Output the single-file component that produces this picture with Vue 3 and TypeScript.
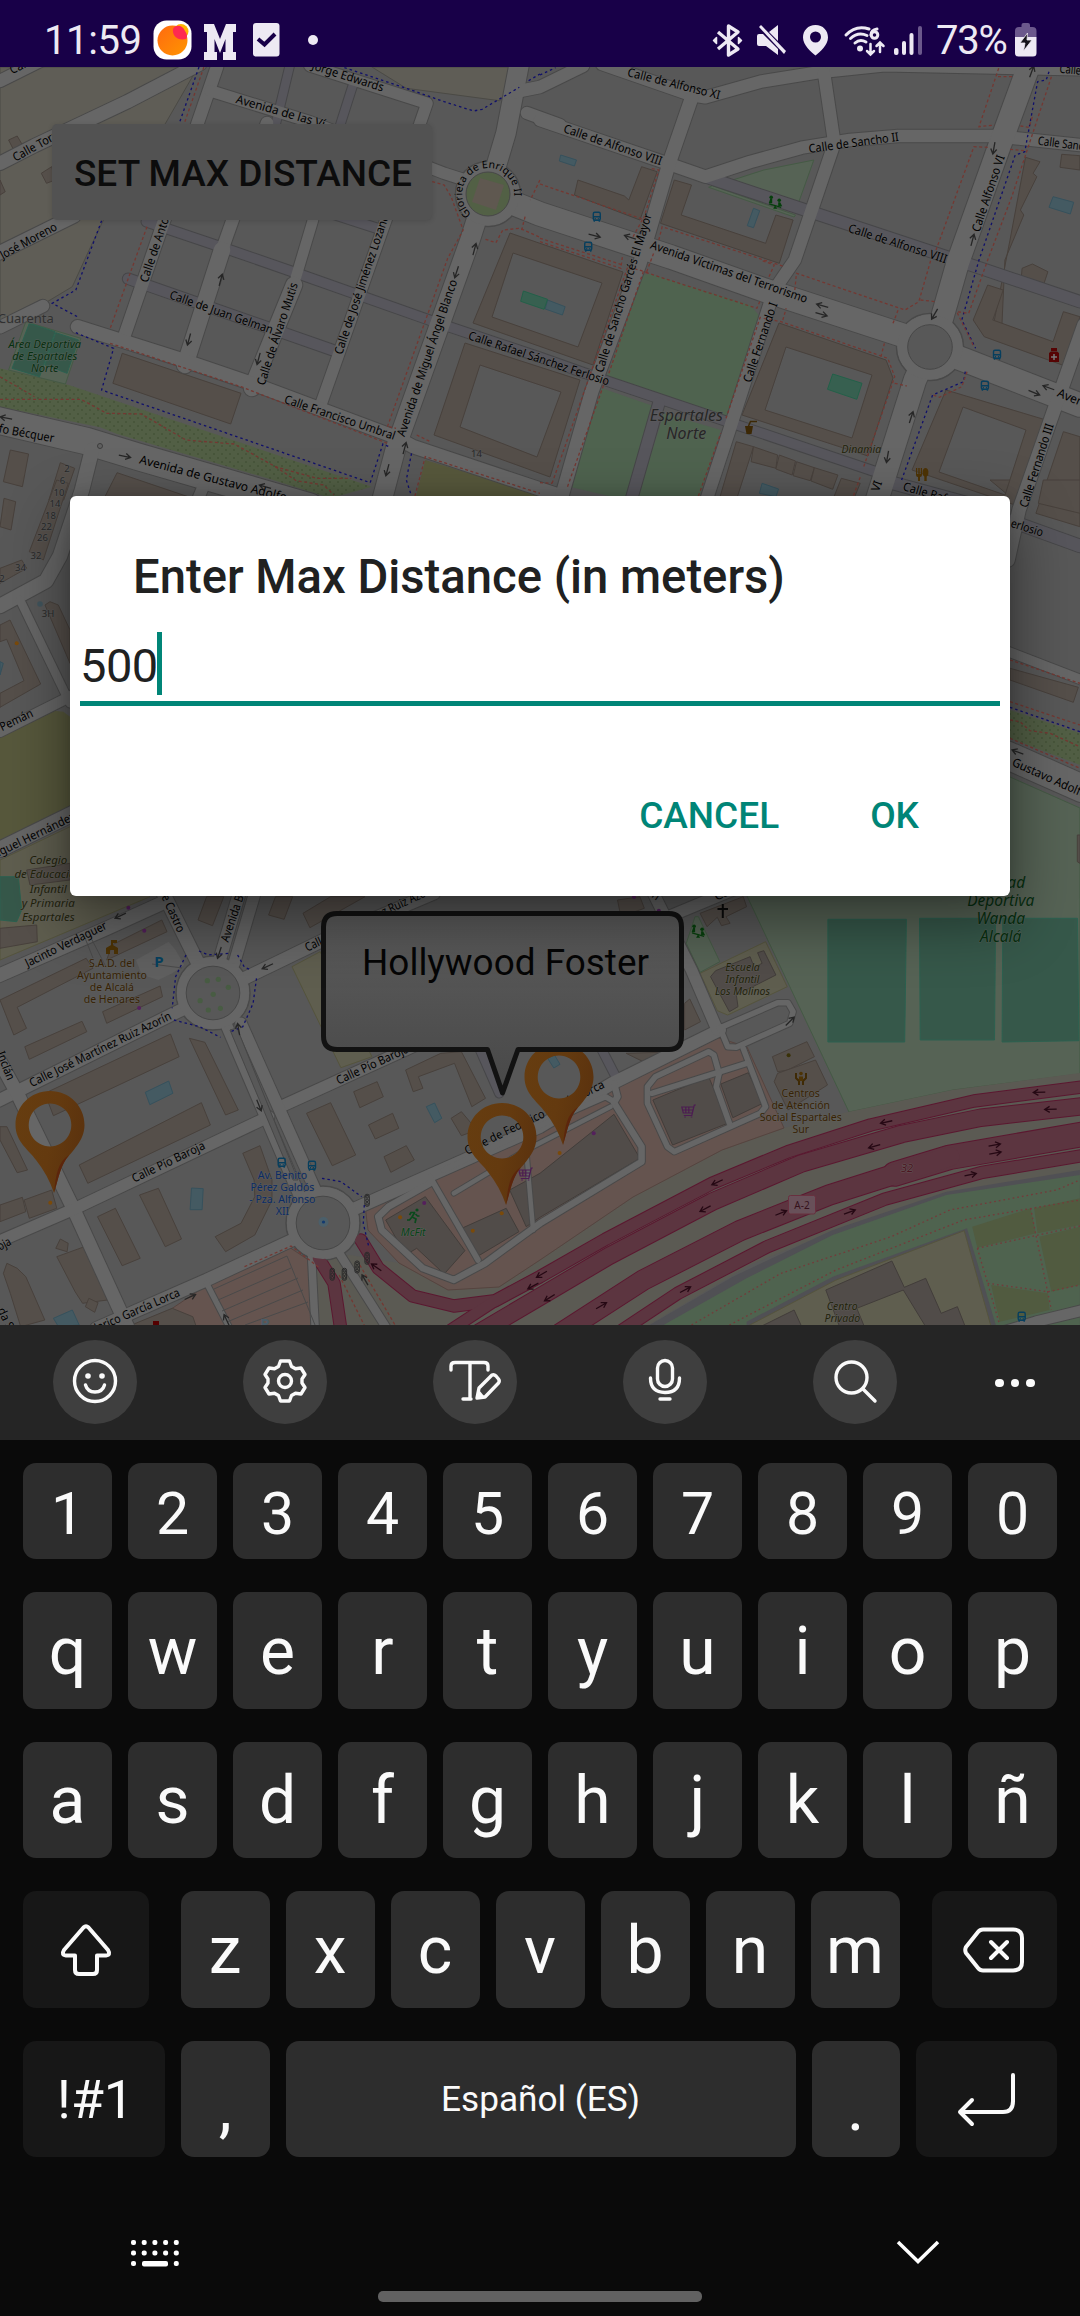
<script setup lang="ts">
type Pt = [number, number]
type Sheet = 'nw' | 'ne' | 'w' | 'e' | 'sw' | 'se' | 'fl' | 'fr' | 'pg'

// Every map sheet is digitised on its own grid: origin x, origin y, scale x, scale y.
const sheets: Record<Sheet, [number, number, number, number]> = {
  nw: [0, 0, 2.904, 3],
  ne: [540, 0, 2.904, 3],
  w: [0, 240, 2.904, 3],
  e: [540, 240, 2.904, 3],
  sw: [0, 880, 2.904, 3],
  se: [540, 880, 2.904, 3],
  fl: [0, 480, 3, 3],
  fr: [990, 480, 3, 3],
  pg: [0, 0, 1, 1],
}

function pt(s: Sheet, x: number, y: number): Pt {
  const [ox, oy, sx, sy] = sheets[s]
  return [Math.round((ox + x / sx) * 10) / 10, Math.round((oy + y / sy) * 10) / 10]
}
function conv(s: Sheet, list: string): string {
  return list
    .split(' ')
    .map((p) => {
      const [x, y] = p.split(',').map(Number)
      return pt(s, x, y).join(',')
    })
    .join(' ')
}

type Area = [Sheet, string, string]
const areaData: Area[] = [
  ['nw', 'sand', '0,201 575,201 480,371 310,640 270,725 210,860 0,990'],
  ['nw', 'sand', '1080,201 1180,265 1450,302 1510,262 1500,201'],
  ['w', 'meadow', '0,385 200,435 1080,740 960,775 800,722 340,582 290,562 0,500'],
  ['w', 'park', '75,245 235,295 190,432 25,390'],
  ['w', 'pitch', '85,250 160,275 115,410 35,385'],
  ['w', 'pitch', '162,278 228,300 195,400 130,375'],
  ['w', 'olive', '1235,660 1568,765 1568,800 1200,800'],
  ['e', 'grass', '300,104 320,102 610,195 635,225 540,540 195,408'],
  ['e', 'grass', '180,445 335,500 250,780 85,740'],
  ['e', 'grass', '360,520 525,570 460,780 280,780'],
  ['ne', 'park', '560,540 650,510 795,480 750,610'],
  ['ne', 'park', '490,562 500,557 742,645 738,651'],
  ['fl', 'olive', '0,770 160,692 190,695 210,710 210,990 0,1080'],
  ['fl', 'school', '0,1140 210,1040 450,1250 0,1440'],
  ['fl', 'pitch', '0,1190 55,1190 65,1290 50,1325 0,1320'],
  ['fr', 'meadow', '60,690 270,760 270,855 60,775'],
  ['pg', 'park', '1010,777 1080,808 1080,1074 953,1090 849,1112 747,896 747,860'],
  ['se', 'pitch', '836,118 1064,118 1059,486 836,486'],
  ['se', 'pitch', '1102,115 1323,115 1320,480 1104,480'],
  ['se', 'pitch', '1344,115 1561,115 1565,482 1342,486'],
  ['sw', 'school', '848,260 930,215 1080,530 990,563'],
  ['sw', 'yard', '395,240 490,185 510,210 535,255 500,280 460,300 430,290 410,280'],
  ['se', 'school', '465,280 655,185 718,320 545,405 515,392'],
  ['se', 'park', '450,110 460,110 522,245 465,277 425,190'],
  ['pg', 'verge', '540,1260 633,1197 722,1150 784,1128 848,1112 952,1090 1080,1073 1080,1172 950,1192 848,1225 750,1265 640,1330 300,1330 313,1260 350,1255 399,1263 448,1290 499,1287'],
  ['pg', 'retail', '716,1037 747,1047 784,1128 722,1150 633,1197 540,1260 499,1287 448,1290 399,1263 368,1230 365,1205 427,1177 540,1127'],
  ['pg', 'retail', '289,1247 313,1263 317,1330 140,1330 210,1283'],
  ['se', 'shoulder', '310,1340 560,1190 850,1050 1180,935 1568,870 1568,1340'],
  ['se', 'grass', '350,1340 600,1195 850,1065 1180,945 1568,885 1568,1340'],
  ['se', 'shoulder', '600,1325 850,1190 1240,1045 1325,1340 600,1340'],
  ['se', 'school', '600,1340 860,1200 1232,1052 1310,1340'],
  ['se', 'meadow2', '1255,1040 1425,985 1440,1060 1270,1103'],
  ['se', 'meadow2', '1435,985 1568,955 1568,1035 1445,1060'],
  ['se', 'meadow2', '1450,1070 1568,1040 1568,1215 1485,1235'],
  ['se', 'meadow2', '1310,1215 1475,1240 1480,1290 1335,1325'],
]

const buildingData: [Sheet, string[]][] = [
  ['nw', ['25,420 50,408 68,440 42,455', '120,520 150,500 160,540 135,550', '0,540 15,575 0,585']],
  ['ne', [
    '110,540 245,588 258,600 295,500 340,515 290,660 100,585',
    '390,540 440,555 410,645 655,730 685,645 735,660 695,790 350,670',
    '1410,472 1452,485 1432,520 1443,530 1395,630 1405,645 1350,780 1340,1010 1312,1000 1365,720',
    '1515,463 1568,467 1568,510 1510,502',
  ]],
  ['w', [
    '355,340 700,460 670,552 328,430',
    '30,630 83,642 65,740 10,725',
    '175,668 217,685 185,780 142,780',
    '340,698 560,775 300,780',
  ]],
  ['e', [
    '1300,135 1345,150 1315,240 1490,305 1520,215 1568,230 1530,380 1290,290 1258,240',
    '1400,85 1430,72 1475,95 1463,132 1398,110',
    '1520,575 1568,590 1568,860 1440,820',
    '570,605 620,620 570,780 520,780',
    '620,620 690,645 685,685 613,665', '695,645 742,663 732,705 685,687',
    '745,665 797,683 785,722 735,707', '797,683 865,705 850,748 787,723',
    '875,715 930,730 910,780 850,780',
  ]],
  ['fl', [
    '12,55 47,65 33,150 0,140', '170,0 205,10 130,240 88,215', '0,265 65,240 80,265 0,310',
    '30,420 122,612 0,682 0,640 72,602 20,478 0,485 0,435', '135,375 150,365 175,375 210,450 210,550',
    '80,1170 210,1150 210,1200 90,1215', '0,1345 110,1335 112,1385 0,1405',
  ]],
  ['fr', ['60,565 265,622 250,667 60,600', '60,0 0,0 60,50', '160,0 270,0 270,100 145,70', '262,1065 270,1065 270,1150 262,1145']],
  ['sw', [
    '0,360 250,235 270,265 50,382 77,445 40,465', '325,195 470,120 485,155 310,240',
    '298,395 465,318 472,350 310,430', '72,500 238,424 252,455 85,538',
    '130,640 495,462 520,530 155,707', '230,855 585,668 611,735 255,910',
    '550,475 595,487 692,690 655,705', '405,945 460,925 527,1077 480,1100',
    '283,1010 335,985 407,1135 355,1157',
    '705,820 755,797 790,900 790,960 740,1065 655,1115 625,1070 700,1030 740,950 738,900',
    '890,700 960,668 1033,825 965,857', '1027,635 1095,605 1113,650 1045,683',
    '1070,735 1140,700 1158,745 1090,777', '1115,830 1180,797 1203,840 1135,877',
    '1178,570 1280,520 1340,515 1410,655 1370,680 1320,550 1215,590 1228,625 1200,635',
    '1310,715 1340,695 1385,750 1340,767', '575,120 600,50 650,50 617,137', '780,105 800,50 850,50 825,118',
    '880,100 960,50 1060,50 900,143', '70,960 150,930 165,985 85,1015', '0,740 20,740 80,870 50,878 0,780',
    '0,975 65,952 75,995 0,1025',
    '165,1130 245,1100 312,1260 240,1270 218,1235', '162,1105 175,1077 198,1090 195,1115',
    '248,1280 258,1255 285,1268 275,1297', '10,1180 20,1150 50,1165 75,1190 130,1320 60,1340 30,1240',
    '370,1340 500,1285 560,1310 570,1340',
  ]],
  ['se', [
    '225,60 290,50 303,85 235,110', '420,370 435,357 466,425 420,450', '250,520 410,515 300,545',
    '465,100 590,50 600,80 540,110 552,130 527,137 515,112 485,140',
    '675,530 775,485 797,530 720,570 690,575', '690,580 800,540 835,615 720,690 680,605',
  ]],
]
const darkBuildingData: [Sheet, string[]][] = [
  ['sw', ['1120,1020 1235,950 1350,1112 1290,1182 1210,1105 1178,1125', '1330,1050 1470,985 1507,1055 1390,1127']],
  ['se', [
    '-88,930 0,880 215,703 290,835 0,1012 -40,1040', '328,660 490,590 545,730 385,795', '525,612 605,578 647,670 560,713',
    '495,290 510,272 610,230 622,262 645,250 632,218 650,212 685,285 570,345 575,380 550,395',
    '830,1230 1022,1143 1058,1222 1120,1195 1165,1300 1212,1280 1235,1340 1120,1340 1055,1230 920,1285 942,1340 870,1340',
    '640,1340 738,1290 760,1340',
  ]],
]
// Blocks built around an inner court: outer outline and court outline.
const courtBlocks: [string, string][] = [
  ['510,233 623,272 593,365 473,323', '513,253 602,283 578,347 492,317'],
  ['465,343 580,380 550,477 434,435', '480,365 561,392 537,457 460,427'],
  ['779,323 886,360 893,378 868,456 742,415', '786,347 872,375 852,438 765,410'],
  ['946,390 1046,420 1018,506 912,470', '963,407 1026,430 1005,495 939,472'],
]

const poolData: Area[] = [
  ['ne', 'pool', '60,465 106,480 100,498 56,483'], ['ne', 'pool', '620,625 638,632 620,683 602,677'],
  ['ne', 'pool', '1490,590 1550,607 1540,642 1478,622'], ['e', 'pool', '22,180 73,200 65,225 15,207'],
  ['e', 'pool', '645,730 693,747 685,770 637,760'], ['e', 'mint', '850,402 935,430 920,478 835,448'],
  ['w', 'mint', '1520,153 1590,178 1580,208 1512,184'], ['sw', 'pool', '422,637 490,603 502,640 435,674'],
  ['sw', 'pool', '556,924 590,926 587,989 552,989'], ['sw', 'pool', '1238,680 1262,669 1283,715 1262,728'],
  ['sw', 'pool', '155,1315 210,1290 230,1335 170,1340'], ['se', 'pool', '22,535 42,525 58,553 40,564'],
  ['fl', 'pool', '0,545 10,550 0,585'],
]

// sheet, kind, width, points
type Road = [Sheet, string, number, string]
const roadData: Road[] = [
  ['nw', 'ped', 9, '842,195 800,375'], ['nw', 'ped', 9, '1028,245 988,375'],
  ['nw', 'ped', 10, '425,665 640,740 850,815 1260,965 1568,1072 1768,1145 2543,1415'],
  ['nw', 'ped', 10, '960,640 1110,690'],
  ['w', 'ped', 11, '372,116 965,330'],
  ['ne', 'ped', 12, '480,530 770,630 1180,770 1568,905'],
  ['e', 'ped', 12, '345,490 262,790'], ['e', 'ped', 13, '1000,722 1240,790'],
  ['fr', 'ped', 13, '60,122 270,198'], ['sw', 'ped', 9, '1390,500 1450,640'],
  ['se', 'ped', 9, '175,500 225,600'],
  ['pg', 'road', 13, '0,81 58,52'], ['nw', 'road', 14, '0,490 100,437 370,305 580,192'],
  ['nw', 'road', 14, '-5,760 215,648'], ['w', 'road', 13, '0,262 125,198'],
  ['pg', 'road', 13, '217,67 124,337'], ['nw', 'road', 12, '610,272 900,365 1290,520 1380,550'],
  ['nw', 'road', 12, '900,197 1240,310 1200,430'], ['pg', 'road', 12, '413,143 320,407'],
  ['pg', 'road', 13, '267,123 222,250'], ['pg', 'road', 17, '222,250 185,365'],
  ['pg', 'road', 11, '313,220 296,277'], ['pg', 'road', 17, '294,285 252,388'],
  ['w', 'road', 14, '225,260 530,360 730,430 1150,592 1200,620 1620,765'],
  ['pg', 'road', 20, '520,60 506,133 492,180'], ['pg', 'road', 20, '478,215 470,240 396,447 382,500'],
  ['pg', 'road', 13, '515,92 540,87 583,66'], ['pg', 'road', 13, '527,113 560,125'],
  ['ne', 'road', 13, '0,360 370,490 480,530 610,486 760,443 900,420 1040,408 1320,408 1568,435'],
  ['ne', 'road', 13, '180,192 440,285 480,292 640,245 820,215 1000,196 1568,208'],
  ['ne', 'road', 14, '440,295 375,490 290,790 150,1175 60,1500'],
  ['ne', 'road', 13, '825,220 855,430 740,780 680,870 550,1290 480,1510'],
  ['pg', 'road', 24, '505,200 540,214 671,257 764,290 902,335 930,347 967,361 1080,405'],
  ['pg', 'road', 23, '1031,60 998,150 958,262 940,325 915,380 877,500'],
  ['pg', 'road', 14, '1084,325 1053,413 1019,510 1008,560'],
  ['w', 'road', 27, '-10,540 250,603 400,650 900,800'], ['w', 'road', 12, '590,740 570,790'],
  ['pg', 'road', 15, '92,450 82,490 60,556 46,581 0,606'],
  ['fl', 'road', 9, '60,360 210,670'], ['fl', 'road', 11, '0,755 230,640'], ['fl', 'road', 16, '0,1108 230,995'],
  ['fr', 'road', 10, '55,515 275,600'], ['fr', 'road', 28, '50,825 275,925'],
  ['sw', 'road', 14, '-5,287 310,145 480,65'], ['sw', 'road', 14, '465,20 585,270'],
  ['sw', 'road', 13, '695,40 635,250'], ['sw', 'road', 12, '740,40 680,250'],
  ['sw', 'road', 13, '700,300 940,180 1260,40'], ['sw', 'road', 13, '-5,662 530,388'],
  ['sw', 'road', 14, '0,545 50,640 215,990 370,1340'], ['sw', 'road', 12, '-5,1085 215,987 780,710'],
  ['sw', 'road', 12, '815,680 1400,405'], ['sw', 'road', 12, '655,430 875,960'], ['sw', 'road', 12, '700,430 920,940'],
  ['sw', 'road', 13, '280,1345 600,1200 860,1075'], ['sw', 'road', 13, '1000,1000 1568,740 1778,610 2090,450'],
  ['sw', 'road', 8, '905,1130 915,1340'], ['sw', 'road', 9, '985,1120 1120,1340'], ['sw', 'road', 6, '600,1210 670,1350'],
  ['se', 'road', 12, '320,20 440,270 515,450'], ['se', 'road', 12, '350,120 560,30'],
  ['se', 'lane', 6, '520,445 690,368 720,368 735,395 725,430 570,502 545,500 525,450'],
  ['se', 'lane', 6, '590,505 655,680 640,700 390,815 370,800 312,670 312,620 335,590 490,515 505,525 520,580'],
  ['se', 'lane', 6, '325,640 600,550'], ['se', 'lane', 6, '520,580 512,620 550,730'],
  ['se', 'lane', 7, '215,610 225,650 215,668 295,800 295,845 0,1030 -160,1150 -250,1200 -340,1165 -460,1050 -470,1010 -440,980 -320,910'],
  ['se', 'lane', 6, '215,665 190,650 -30,750 -280,870'], ['se', 'lane', 6, '-320,890 -180,1140'],
  ['se', 'lane', 5, '205,680 -40,810 -250,940'], ['se', 'lane', 5, '-40,810 -20,1050'],
  ['se', 'motor', 12, '1580,620 1260,663 960,735 720,815 500,910 190,1078 0,1190 -130,1262 -250,1278 -370,1248 -470,1165 -520,1080'],
  ['se', 'motor', 17, '1580,678 1280,713 1050,762 760,850 500,965 200,1128 0,1250 -180,1360'],
  ['se', 'motor', 11, '0,1190 -130,1262 -260,1350'],
  ['se', 'motor', 24, '1580,762 1190,832 1030,882'], ['se', 'motor', 20, '1190,830 840,945 580,1052 300,1200 60,1360'],
  ['se', 'motor', 12, '1580,826 1280,878 1000,958 660,1100 400,1240 225,1360'],
  ['sw', 'motor', 12, '925,1135 970,1210 990,1350'],
  ['se', 'road', 11, '1330,1360 1440,1325 1580,1290'],
]
const roads = roadData.map(([s, k, w, p]) => ({ kind: k, w, d: conv(s, p) }))

const dashData: Area[] = [
  ['nw', 'blue', '578,201 520,371'], ['nw', 'red', '592,201 535,371'],
  ['nw', 'blue', '1000,203 1180,265 1290,305 1375,333 1400,328 1508,262'], ['nw', 'blue', '1535,242 1568,222'],
  ['nw', 'blue', '295,662 220,870 152,910 228,952'], ['nw', 'red', '427,680 320,985'],
  ['nw', 'red', '1255,545 1290,555 1310,590 1345,690 1300,775 1125,1280'],
  ['nw', 'red', '1568,540 1540,600'], ['nw', 'red', '1410,718 1440,728 1460,690 1510,685 1568,712'],
  ['nw', 'red', '1525,650 1515,690'], ['w', 'blue', '220,278 330,325 295,450 1075,728 1112,612 1130,620'],
  ['w', 'red', '320,310 700,440 1130,612'], ['w', 'red', '1130,560 1150,565'], ['w', 'red', '0,410 100,470'],
  ['w', 'red', '0,478 235,478 310,520 410,522 540,600 680,612 800,680 920,715 1020,715'],
  ['w', 'red', '800,680 860,722 940,735 970,765'], ['w', 'blue', '1195,640 1180,720 1195,768'],
  ['w', 'red', '1205,768 1235,650 1568,760'], ['w', 'red', '1210,585 1250,605'],
  ['ne', 'red', '0,552 300,658 345,510 320,505'], ['ne', 'red', '270,710 300,655'], ['ne', 'red', '345,720 355,680 710,800'],
  ['ne', 'red', '0,715 240,795'], ['ne', 'red', '1332,205 1275,380 1320,375'], ['ne', 'red', '1330,230 1375,230'],
  ['ne', 'red', '1300,442 1260,440 1150,750'], ['ne', 'blue', '1478,215 1470,240 1445,245 1408,455 1380,465 1275,780 1225,960 1265,1045'],
  ['ne', 'red', '1485,230 1370,590 1300,780 1245,940 1210,935 1260,1040'], ['ne', 'red', '1395,378 1420,382 1430,350'], ['ne', 'red', '1365,448 1410,452'],
  ['ne', 'blue', '0,225 45,203'],
  ['e', 'red', '0,5 235,85 240,45'], ['e', 'red', '310,95 330,40'], ['e', 'red', '665,110 680,75 640,60'],
  ['e', 'red', '200,400 300,95 630,205 640,180'], ['e', 'red', '640,230 540,535'],
  ['e', 'red', '35,730 255,80 320,100'], ['e', 'red', '0,728 35,730'], ['e', 'red', '80,740 190,420'],
  ['e', 'red', '460,768 525,580'], ['e', 'red', '740,150 745,100 1060,210 1100,185 1135,60'],
  ['e', 'red', '1025,250 1040,210'], ['e', 'red', '1105,180 1150,185'], ['e', 'red', '650,235 700,245 1010,355 1030,410 940,680'],
  ['e', 'red', '705,240 715,205'], ['e', 'red', '990,350 1000,310'], ['e', 'red', '1030,430 1065,438'],
  ['e', 'blue', '1235,395 1230,425 1140,465 1050,720'], ['e', 'red', '1240,395 1225,440 1160,472 1135,462'],
  ['e', 'red', '930,712 910,768'], ['fr', 'red', '60,540 270,610'], ['fr', 'red', '60,665 270,735'],
  ['fr', 'blue', '60,682 270,755'], ['fr', 'red', '60,720 90,725 120,752 180,760 270,800'], ['fr', 'red', '60,775 270,865'],
  ['sw', 'blue', '540,225 510,290 500,385'], ['sw', 'blue', '578,213 605,225 665,220'], ['sw', 'blue', '690,225 710,262 730,270'],
  ['sw', 'blue', '745,295 735,370 705,440 670,455'], ['sw', 'blue', '505,420 580,440 640,472'],
  ['sw', 'blue', '935,895 990,905 1050,950'], ['sw', 'blue', '1058,975 1055,1030 1072,1105'],
  ['sw', 'red', '710,1160 845,1098 930,1165'], ['sw', 'red', '985,1185 1060,1340'], ['sw', 'red', '1045,1155 1150,1340'],
  ['se', 'pink', '440,1335 700,1180 1020,1070 1190,990 1500,930 1568,900'], ['se', 'pink', '550,1335 860,1170 1230,1020 1568,960'],
  ['se', 'pink', '1425,985 1440,1065 1485,1290'], ['se', 'pink', '1270,1105 1568,1038'],
  ['se', 'pink', '1270,1105 1300,1210 1335,1335'], ['se', 'pink', '1300,1210 1475,1235 1568,1215'],
]

// Street names run along a baseline given by its first and last point.
type Label = [Sheet, string, number, number, number, number]
const labelData: Label[] = [
  ['nw', 'Call', 35, 223, 85, 198], ['nw', 'Calle Torr', 45, 485, 168, 415], ['nw', 'José Moreno', 8, 778, 168, 688],
  ['nw', 'Jorge Edwards', 903, 207, 1110, 275], ['nw', 'Avenida de las Ví', 683, 308, 940, 385],
  ['w', 'Calle de Antoni', 428, 130, 500, -90], ['w', 'Calle de Juan Gelman', 490, 175, 788, 282],
  ['w', 'Calle de Álvaro Mutis', 768, 438, 865, 133], ['w', 'Calle de José Jiménez Lozano', 993, 346, 1130, -72],
  ['w', 'Avenida de Miguel Ángel Blanco', 1175, 592, 1328, 124], ['w', 'Calle Francisco Umbral', 823, 488, 1143, 600],
  ['w', 'Calle Rafael Sánchez Ferlosio', 1358, 297, 1765, 437], ['w', 'fo Bécquer', -5, 577, 155, 607],
  ['w', 'Avenida de Gustavo Adolfo', 403, 670, 830, 785],
  ['ne', 'Calle de Alfonso XI', 252, 228, 520, 298], ['ne', 'Calle de Alfonso VIII', 66, 396, 350, 496],
  ['ne', 'Calle de Sancho II', 782, 459, 1043, 422], ['ne', 'Calle de Alfonso VIII', 893, 695, 1178, 790],
  ['ne', 'Calle Alfonso VI', 1276, 698, 1350, 470], ['ne', 'Calle Sancho', 1445, 434, 1610, 455], ['ne', 'Calle', 1508, 218, 1570, 224],
  ['e', 'Calle de Sancho Garcés El Mayor', 182, 400, 325, -75], ['e', 'Avenida Víctimas del Terrorismo', 318, 25, 772, 189],
  ['e', 'Calle Fernando I', 612, 430, 690, 192], ['e', 'Avenida', 1500, 468, 1620, 520],
  ['e', 'Calle Fernando III', 1415, 805, 1492, 555], ['e', 'VI', 984, 757, 994, 727], ['e', 'Calle Rafael', 1052, 750, 1220, 800],
  ['fl', 'Pemán', 6, 754, 102, 708], ['fl', 'Miguel Hernández', -30, 1143, 228, 1018],
  ['fr', 'erlosio', 60, 140, 155, 170], ['fr', 'Gustavo Adolfo', 64, 856, 285, 955],
  ['sw', 'Jacinto Verdaguer', 80, 262, 313, 145], ['sw', 'e Castro', 468, 50, 517, 160], ['sw', 'Avenida B', 663, 188, 708, 50],
  ['sw', 'Calle José Martínez Ruiz Azorín', 92, 622, 500, 416], ['sw', 'Calle José Martínez Ruiz Azor', 892, 215, 1250, 43],
  ['sw', 'Calle Pío Baroja', 390, 908, 598, 805], ['sw', 'Calle Pío Baroja', 983, 614, 1190, 515],
  ['sw', 'oja', 0, 1112, 35, 1093], ['sw', 'Inclán', -10, 520, 22, 603], ['sw', 'Federico García Lorca', 240, 1375, 525, 1247],
  ['sw', 'Calle de Federico García Lorca', 1356, 825, 1758, 622], ['sw', 'da S', -8, 1290, 20, 1350],
  ['se', 'Calle', 512, 62, 590, 28], ['se', 'n', 322, 50, 338, 62],
]
const labels = labelData.map(([s, text, x1, y1, x2, y2]) => {
  const a = pt(s, x1, y1)
  const b = pt(s, x2, y2)
  const len = Math.hypot(b[0] - a[0], b[1] - a[1])
  const angle = (Math.atan2(b[1] - a[1], b[0] - a[0]) * 180) / Math.PI
  return { text, len, t: `translate(${a[0]} ${a[1]}) rotate(${angle.toFixed(2)})` }
})

// Places: sheet, class, centre x, first baseline, size, leading, lines
type Place = [Sheet, string, number, number, number, number, string[]]
const placeData: Place[] = [
  ['w', 'quarter up', 75, 248, 13, 14, ['Cuarenta']],
  ['w', 'sport', 130, 325, 11, 12, ['Área Deportiva', 'de Espartales', 'Norte']],
  ['e', 'quarter', 425, 542, 16, 18, ['Espartales', 'Norte']],
  ['e', 'leisure', 933, 640, 10.5, 12, ['Dinamia']],
  ['fl', 'edu', 145, 1152, 11.5, 14.3, ['Colegio', 'de Educación', 'Infantil', 'y Primaria', 'Espartales']],
  ['sw', 'office', 325, 260, 10.5, 12, ['S.A.D. del', 'Ayuntamiento', 'de Alcalá', 'de Henares']],
  ['sw', 'transit', 820, 896, 10.5, 12, ['Av. Benito', 'Pérez Galdós', '- Pza. Alfonso', 'XII']],
  ['sw', 'gym', 1200, 1068, 10.5, 12, ['McFit']],
  ['se', 'edu', 588, 272, 10.5, 12, ['Escuela', 'Infantil', 'Los Molinos']],
  ['se', 'office', 757, 650, 10.5, 12, ['Centros', 'de Atención', 'Social Espartales', 'Sur']],
  ['se', 'sport', 1338, 25, 15.5, 17.8, ['Ciudad', 'Deportiva', 'Wanda', 'Alcalá']],
  ['se', 'edu', 878, 1289, 10.5, 12, ['Centro', 'Privado']],
  ['se', 'exit', 1066, 875, 11, 12, ['32']],
]
const places = placeData.flatMap(([s, cls, cx, y, size, lead, lines]) => {
  const p = pt(s, cx, y)
  return lines.map((text, i) => ({ text, cls, size, x: p[0], y: p[1] + i * lead }))
})
const numbers: [string, number, number][] = [
  ['14', 476.5, 457], ['2', 67, 472], ['6', 62.5, 484], ['10', 59, 495.5], ['14', 55, 507], ['18', 50.5, 519],
  ['22', 46.5, 530], ['26', 42.5, 541], ['32', 36, 559], ['34', 20.5, 571], ['2', 2, 582], ['3H', 48, 617],
]
const arrows = ([
  ['nw', 1378, 748, -75], ['w', 1326, 96, 108], ['w', 641, 120, -75],
  ['w', 549, 298, 105], ['w', 751, 356, 105], ['w', 1175, 625, -75], ['w', 1125, 690, 105], ['w', 18, 534, 190],
  ['w', 362, 649, 12], ['w', 770, 740, 195], ['ne', 158, 707, 15], ['ne', 262, 712, 198], ['ne', 1428, 215, -70],
  ['ne', 1318, 444, 100], ['ne', 1256, 720, -75], ['e', 820, 197, 195], ['e', 817, 223, 15], ['e', 1146, 222, 120],
  ['e', 1078, 532, -72], ['e', 1009, 650, 100], ['e', 1477, 443, 200], ['e', 1435, 458, 22], ['fr', 83, 816, 200],
  ['sw', 350, 107, 155], ['sw', 637, 218, 108], ['sw', 777, 259, 155], ['sw', 693, 448, -100], ['sw', 752, 676, 68],
  ['sw', 552, 1251, -25], ['sw', 1060, 1200, -120], ['sw', 658, 1320, -115], ['se', 726, 424, -45],
] as [Sheet, number, number, number][]).map(([s, x, y, r]) => ({ p: pt(s, x, y), r }))
const motorArrows = ([
  [1450, 637, 178], [1483, 688, 178], [1006, 726, 168], [971, 799, 165], [515, 907, 155], [480, 986, 152], [28, 1253, 148],
  [1320, 795, -10], [1322, 819, -10], [1250, 884, -12], [700, 999, -22], [899, 996, -20], [422, 1229, -28], [178, 1277, -30],
  [5, 1183, 150], [-20, 1218, 152], [-475, 1162, 215],
] as [number, number, number][]).map(([x, y, r]) => ({ p: pt('se', x, y), r }))
const buses = ([['ne', 165, 650], ['e', 140, 20], ['e', 1327, 344], ['e', 1292, 437], ['sw', 818, 848], ['sw', 906, 857], ['se', 1399, 1310]] as [Sheet, number, number][]).map(([s, x, y]) => pt(s, x, y))
const lights = ([[1066, 961], [1066, 1135], [1037, 1161], [1000, 1183], [965, 1183]] as Pt[]).map(([x, y]) => pt('sw', x, y))
const dots = ([
  ['sw', 373, 83, '#54205c'], ['sw', 419, 152, '#54205c'], ['sw', 404, 384, '#54205c'], ['sw', 1232, 969, '#54205c'],
  ['se', 273, 51, '#54205c'], ['se', 345, 92, '#54205c'], ['se', 156, 760, '#54205c'], ['sw', 146, 968, '#7a4a0a'],
  ['sw', 1162, 1012, '#7a4a0a'], ['sw', 1373, 1052, '#7a4a0a'], ['sw', 1457, 1000, '#7a4a0a'], ['se', 57, 819, '#7a4a0a'],
  ['fl', 50, 490, '#7a4a0a'], ['se', 722, 526, '#3a3208'],
] as [Sheet, number, number, string][]).map(([s, x, y, c]) => ({ p: pt(s, x, y), c }))
const trees = ([[602, 302], [634, 298], [663, 322], [619, 343], [581, 362], [605, 390], [640, 385]] as Pt[]).map(([x, y]) => pt('sw', x, y))
const carts = [pt('se', 432, 693), pt('sw', 1527, 882)]
const playgrounds = [pt('ne', 683, 607), pt('se', 459, 154)]
const pins: Pt[] = [[50, 1125], [559, 1077], [502, 1137]]

const areas = areaData.map(([s, c, p]) => ({ c, d: conv(s, p) }))
const pools = poolData.map(([s, c, p]) => ({ c, d: conv(s, p) }))
const dashes = dashData.map(([s, c, p]) => ({ c, d: conv(s, p) }))
const buildings = buildingData.flatMap(([s, l]) => l.map((p) => conv(s, p)))
const darkBuildings = darkBuildingData.flatMap(([s, l]) => l.map((p) => conv(s, p)))

const digitKeys = '1234567890'.split('')
const topKeys = 'qwertyuiop'.split('')
const homeKeys = 'asdfghjklñ'.split('')
const lowKeys = 'zxcvbnm'.split('')
</script>

<template>
  <div class="screen">
    <header class="status">
      <span class="clock">11:59</span>
      <svg class="app" width="40" height="40" viewBox="0 0 40 40">
        <defs>
          <linearGradient id="orb" x1="0" y1="0" x2="1" y2="1"><stop offset="0" stop-color="#ff6a10" /><stop offset="1" stop-color="#ff9500" /></linearGradient>
        </defs>
        <rect x="0.5" y="0.5" width="38" height="39" rx="13" fill="#fff" />
        <circle cx="28" cy="11.5" r="7.5" fill="#ffb300" />
        <circle cx="19.5" cy="20.5" r="15" fill="url(#orb)" />
        <path d="M20 9 C22 5 29 4 32 11 C35 15 34 18 33 19 C25 21 19 16 20 9Z" fill="#ff2a50" />
      </svg>
      <svg class="mlogo" width="32" height="36" viewBox="0 0 32 36"><path d="M0 0H10L16 15L22 0H32V8H29V28H32V36H19V28H21.500V15L16 29L10.500 15V28H13V36H0V28H3V8H0Z" fill="#ede9f3" /></svg>
      <svg class="check" width="27" height="34" viewBox="0 0 27 34"><rect width="26.500" height="33.500" rx="3" fill="#ede9f3" /><path d="M5 16L11.500 21.500L22 11" fill="none" stroke="#180048" stroke-width="4" /></svg>
      <i class="more-dot"></i>
      <svg class="indicators" width="216" height="40" viewBox="710 20 216 40" fill="none" stroke="#ede9f3">
        <g stroke-width="3.400" stroke-linejoin="round">
          <path d="M718 32L738 49L728.500 55V26L738 32L718 49" />
          <path d="M713.500 40.500L716.500 37.500V43.500Z M741.500 40.500L738.500 37.500V43.500Z" fill="#ede9f3" stroke-width="1.500" />
        </g>
        <g stroke="none" fill="#ede9f3">
          <path d="M757 36Q757 34 759 34H763L778 49V55L766 46H759Q757 46 757 44Z" />
          <path d="M778 25V41L769 32Z" />
          <path d="M759 27L761 25L786 51L784 54Z" />
          <path fill-rule="evenodd" d="M815.500 25C808 25 803 30.500 803 37.500C803 45 811 52 815.500 55.500C820 52 828 45 828 37.500C828 30.500 823 25 815.500 25ZM815.500 31.500a5.500 5.500 0 1 1 0 11a5.500 5.500 0 1 1 0-11Z" />
          <circle cx="860" cy="48.500" r="3" />
          <rect x="894" y="48" width="4.500" height="7" rx="2" /><rect x="902" y="41" width="4" height="14" rx="2" /><rect x="909.500" y="33" width="4" height="22" rx="2" /><rect x="918" y="26" width="4" height="29" rx="2" fill="#6b588c" />
        </g>
        <g stroke-width="3" stroke-linecap="round">
          <path d="M846 35Q856 24.500 869 29" /><path d="M850.500 38.500Q858 31.500 867 35.500" /><path d="M855 43Q860 38.500 866 42" />
          <path d="M877 29Q871 30 871 35" /><circle cx="874.500" cy="35" r="3.300" />
          <path d="M870.500 44V54M867 51L870.500 54.500L874 51M880 52V43M876.500 46L880 42.500L883.500 46" stroke-width="2.500" />
        </g>
      </svg>
      <span class="level">73%</span>
      <svg class="battery" width="22" height="34" viewBox="0 0 22 34">
        <path d="M6.500 4V2Q6.500 0 8.500 0H13Q15 0 15 2V4H17.500Q21.500 4 21.500 8V14H0V8Q0 4 4 4Z" fill="#6b588c" />
        <path d="M0 14H21.500V30Q21.500 33.500 18 33.500H3.500Q0 33.500 0 30Z" fill="#ede9f3" />
        <path d="M12.500 10L5 20H10L8.500 28L17 17H12Z" fill="#15131a" stroke="#ede9f3" stroke-width="0.800" />
      </svg>
    </header>

    <main class="stage">
      <svg class="map" width="1080" height="1258" viewBox="0 67 1080 1258">
        <defs>
          <pattern id="scrub" width="8" height="8" patternUnits="userSpaceOnUse"><rect width="8" height="8" fill="#525f45" /><circle cx="2" cy="2" r="0.700" fill="#364629" /><circle cx="6" cy="6" r="0.700" fill="#364629" /></pattern>
          <linearGradient id="bubble" x1="0" y1="0" x2="0" y2="1"><stop offset="0" stop-color="#5c5c5c" /><stop offset="1" stop-color="#484848" /></linearGradient>
          <linearGradient id="pin" x1="0" y1="0" x2="1" y2="0.300"><stop offset="0" stop-color="#663d10" /><stop offset="0.600" stop-color="#643a0f" /><stop offset="1" stop-color="#5c330e" /></linearGradient>
        </defs>
        <rect x="0" y="67" width="1080" height="1258" fill="#585858" />
        <polygon v-for="(a, i) in areas" :key="'a' + i" :points="a.d" :class="a.c" />
        <g class="building">
          <polygon v-for="(b, i) in buildings" :key="i" :points="b" />
          <path v-for="(c, i) in courtBlocks" :key="'c' + i" fill-rule="evenodd" :d="`M${c[0]}Z M${c[1]}Z`" />
        </g>
        <g class="building dark"><polygon v-for="(b, i) in darkBuildings" :key="i" :points="b" /></g>
        <polygon v-for="(a, i) in pools" :key="'w' + i" :points="a.d" :class="a.c" />
        <g class="lines">
          <polyline v-for="(r, i) in roads" :key="'k' + i" :points="r.d" :class="r.kind + '-case'" :stroke-width="r.w + 1.500" />
          <circle cx="488" cy="194" r="32.500" class="ring-case" /><circle cx="930" cy="347" r="33.500" class="ring-case" />
          <circle cx="213" cy="993" r="37" class="ring-case" /><circle cx="323" cy="1223" r="37" class="ring-case" />
          <polyline v-for="(r, i) in roads" :key="'f' + i" :points="r.d" :class="r.kind" :stroke-width="r.w - 0.500" />
        </g>
        <g class="rings">
          <circle cx="488" cy="194" r="31.500" /><circle cx="930" cy="347" r="32.500" /><circle cx="213" cy="993" r="36" /><circle cx="323" cy="1223" r="36" />
        </g>
        <g fill="#585858" stroke="#474747">
          <circle cx="488" cy="194" r="22" fill="#526045" /><circle cx="930" cy="347" r="22.300" /><circle cx="213" cy="993" r="26.800" /><circle cx="323" cy="1223" r="26.800" />
          <path d="M230 1030L293 1180H298L237 1028Z" />
        </g>
        <path d="M480 178L504 185L496 210L472 202Z" fill="#5f5850" />
        <circle cx="100" cy="446" r="2.500" fill="#606060" stroke="#3c3c3c" />
        <circle v-for="(t, i) in trees" :key="'t' + i" :cx="t[0]" :cy="t[1]" r="2.600" fill="#485c43" />
        <circle cx="323.500" cy="1222" r="5" fill="#4b5f6a" /><circle cx="323.500" cy="1222" r="1.600" fill="#123a70" />
        <circle cx="40" cy="604" r="2.800" fill="#41545c" />
        <g fill="none" stroke="#4a4a4a" stroke-width="1">
          <path d="M214 1289L287 1256M218 1300L291 1268M222 1311L298 1278M227 1322L303 1290M245 1325L308 1302M287 1256L315 1325" />
          <path d="M85 938L93 958M90 936L105 965M152 964L182 968" />
        </g>
        <polyline v-for="(a, i) in dashes" :key="'d' + i" :points="a.d" :class="['dash', a.c]" />
        <g class="names">
          <text v-for="(l, i) in labels" :key="'l' + i" :transform="l.t" :textLength="l.len" lengthAdjust="spacingAndGlyphs">{{ l.text }}</text>
          <path id="glorieta" d="M471.500 214A26 26 0 1 1 514 197" fill="none" stroke="none" />
          <text class="round"><textPath href="#glorieta" textLength="106">Glorieta de Enrique II</textPath></text>
        </g>
        <text v-for="(n, i) in numbers" :key="'n' + i" class="house" :x="n[1]" :y="n[2]">{{ n[0] }}</text>
        <text v-for="(p, i) in places" :key="'p' + i" :class="['place', p.cls]" :x="p.x" :y="p.y" :font-size="p.size">{{ p.text }}</text>
        <g fill="none" stroke="#262626" stroke-width="1.300">
          <path v-for="(a, i) in arrows" :key="'ar' + i" d="M-6 0H5M1 -3L6 0L1 3" :transform="`translate(${a.p[0]} ${a.p[1]}) rotate(${a.r})`" />
        </g>
        <g fill="none" stroke="#250813" stroke-width="1.300">
          <path v-for="(a, i) in motorArrows" :key="'ma' + i" d="M-6 0H5M1 -3L6 0L1 3" :transform="`translate(${a.p[0]} ${a.p[1]}) rotate(${a.r})`" />
        </g>
        <circle v-for="(d, i) in dots" :key="'o' + i" :cx="d.p[0]" :cy="d.p[1]" r="2" :fill="d.c" />
        <g v-for="(b, i) in buses" :key="'b' + i" :transform="`translate(${b[0]} ${b[1]})`" fill="none" stroke="#073f5e" stroke-width="1.400">
          <rect x="-3.500" y="-4.500" width="7" height="8" rx="1.500" /><path d="M-3.500 0H3.500M-2.500 3V5M2.500 3V5M-2 2H-1M1 2H2" />
        </g>
        <g v-for="(b, i) in lights" :key="'s' + i" :transform="`translate(${b[0]} ${b[1]})`" fill="none" stroke="#292929" stroke-width="1">
          <rect x="-2.200" y="-6" width="4.400" height="12" rx="2" /><circle cy="-3.500" r="1.300" /><circle r="1.300" /><circle cy="3.500" r="1.300" />
        </g>
        <g v-for="(b, i) in carts" :key="'ct' + i" :transform="`translate(${b[0]} ${b[1]})`" fill="none" stroke="#4c1c52" stroke-width="1.200">
          <path d="M-7 -4H5L3.500 2H-5.500ZM-6 -1H4M-3 -4V2M0 -4V2M7 -6H5.500L3 4.500H-5" /><path d="M-4.500 6H-3M2 6H3.500" />
        </g>
        <g v-for="(b, i) in playgrounds" :key="'pl' + i" :transform="`translate(${b[0]} ${b[1]})`" fill="#06400c">
          <circle cx="-4" cy="-5" r="1.800" /><circle cx="4" cy="-2" r="1.800" /><path d="M-5 -3.500H-3V1H-6.500ZM3 0H5L7 4H3Z" /><path d="M-6 1.500L6 5" stroke="#06400c" stroke-width="1.200" /><path d="M0 3L-2 6.500H2Z" />
        </g>
        <g fill="#4d3305">
          <path d="M916 468V475Q916 477 918 477V481H920V477Q922 477 922 475V468H920.800V474H919.700V468H918.300V474H917.200V468Z M925.500 468a3 4.500 0 0 1 1.200 8.600V481H924.300V476.600A3 4.500 0 0 1 925.500 468Z" />
          <path d="M745 426H753L751.500 434H746.500Z" fill="#3c2805" /><path d="M748.500 426L750.500 421.500H757" fill="none" stroke="#3c2805" stroke-width="1.500" />
          <path d="M106 948L112 944.500L118 948V954H114V950H110V954H106ZM111 940H117V943H113V945H111Z" />
          <path d="M796 1073V1078L799 1081V1085M806 1073V1078L803 1081V1085" stroke="#3f2a05" stroke-width="2" fill="none" /><circle cx="801" cy="1073.500" r="1.800" /><path d="M799 1076.500H803V1081H799Z" />
        </g>
        <path d="M1051 348H1057V351H1051ZM1049 353L1051 351.500H1057L1059 353V362H1049Z" fill="#560404" /><path d="M1054 354V360M1051 357H1057" stroke="#777" stroke-width="1.500" />
        <path d="M722.800 904V918M717.500 909H728" stroke="#0a0a0a" stroke-width="2" />
        <text class="parking" x="159" y="966.500">P</text><text class="parking faint" x="265" y="1329">P</text>
        <path d="M415 1212L412 1217L416 1219L415 1223M412 1217L409.500 1220H407M415 1212.500H411L409.500 1215M415.500 1214L417.500 1216H419.500" stroke="#0a4a1c" stroke-width="1.700" fill="none" /><circle cx="417" cy="1210" r="1.600" fill="#0a4a1c" />
        <rect x="153" y="1321" width="6" height="4" fill="#500" />
        <rect x="788.500" y="1195.500" width="27" height="18.500" rx="2" fill="#685059" stroke="#68303f" /><text class="shield" x="802" y="1209">A-2</text>
        <g v-for="(p, i) in pins" :key="'pin' + i" :transform="`translate(${p[0]} ${p[1]})`">
          <path fill="url(#pin)" fill-rule="evenodd" d="M0 -34C19.500 -34 34.500 -19 34.500 0C34.500 16 22 26 15 36C9 46 8 56 4 68C0 56 -6 45 -14 35C-21 25 -34.500 17 -34.500 0C-34.500 -19 -19.500 -34 0 -34ZM0 -21.500a21.300 21.500 0 1 0 0.010 0Z" />
          <path d="M19 30C11 39 8 54 4 68C6 49 8 37 19 30Z" fill="#5c250c" />
        </g>
        <path d="M337 913.500H669Q681.500 913.500 681.500 927V1036Q681.500 1049.500 669 1049.500H518L502.500 1093L487.500 1049.500H337Q323.500 1049.500 323.500 1036V927Q323.500 913.500 337 913.500Z" fill="url(#bubble)" stroke="#121212" stroke-width="5" stroke-linejoin="round" />
        <text class="caption" x="362" y="975" textLength="287" lengthAdjust="spacingAndGlyphs">Hollywood Foster</text>
      </svg>
      <button class="set-distance">SET MAX DISTANCE</button>
      <section class="dialog">
        <h1>Enter Max Distance (in meters)</h1>
        <div class="field"><span>500</span><i class="caret"></i></div>
        <div class="actions"><button>CANCEL</button><button>OK</button></div>
      </section>
    </main>

    <nav class="tools">
      <span class="tool"><svg viewBox="-24 -24 48 48"><circle r="20.500" /><path d="M-9.500 4Q-7.500 11 0 11Q7.500 11 9.500 4" /><g class="solid"><circle cx="-7" cy="-5" r="2.800" /><circle cx="7" cy="-5" r="2.800" /></g></svg></span>
      <span class="tool"><svg viewBox="-24 -24 48 48"><circle r="6.500" /><path d="M-4.500 -20H4.500L6.500 -14.500L10.500 -12.200L16 -13L20 -6.500L17 -2V2L20 6.500L16 13L10.500 12.200L6.500 14.500L4.500 20H-4.500L-6.500 14.500L-10.500 12.200L-16 13L-20 6.500L-17 2V-2L-20 -6.500L-16 -13L-10.500 -12.200L-6.500 -14.500Z" /></svg></span>
      <span class="tool"><svg viewBox="-24 -24 48 48"><path d="M-24 -11V-15Q-24 -18.500 -20 -18.500H9Q13 -18.500 13 -15V-11M-5 -18V18M-12 18H-4" /><path d="M2 17L4 7L17 -6Q19 -7 21 -5L23.500 -2Q25 0 23.500 2L10 16Z" /><path d="M2 17L4 9L9 15Z" class="solid" /></svg></span>
      <span class="tool"><svg viewBox="-24 -24 48 48"><rect x="-7.500" y="-20.500" width="15" height="26" rx="7.500" /><path d="M-14.500 -3Q-14.500 11.500 0 11.500Q14.500 11.500 14.500 -3M-5 18H5" /></svg></span>
      <span class="tool"><svg viewBox="-24 -24 48 48"><circle cx="-3.500" cy="-3.500" r="15.500" /><path d="M8 8L20 20" /></svg></span>
      <span class="ellipsis"><i></i><i></i><i></i></span>
    </nav>

    <section class="keyboard">
      <div class="row digits"><kbd v-for="k in digitKeys" :key="k">{{ k }}</kbd></div>
      <div class="row"><kbd v-for="k in topKeys" :key="k">{{ k }}</kbd></div>
      <div class="row mid"><kbd v-for="k in homeKeys" :key="k">{{ k }}</kbd></div>
      <div class="row">
        <kbd class="fn shift"><svg width="60" height="60" viewBox="-30 -30 60 60"><path d="M-2.500 -22.500Q0 -25 2.500 -22.500L22 0Q25 5 20 5.500H11V20Q11 24 7 24H-7Q-11 24 -11 20V5.500H-20Q-25 5 -22 0Z" /></svg></kbd>
        <kbd v-for="k in lowKeys" :key="k">{{ k }}</kbd>
        <kbd class="fn erase"><svg width="64" height="60" viewBox="-32 -30 64 60"><path d="M-11 -20.500H19Q28 -20.500 28 -12V12Q28 20.500 19 20.500H-11Q-14 20.500 -16 18L-28 3Q-29.500 0 -28 -3L-16 -18Q-14 -20.500 -11 -20.500ZM-3 -8L13 8M13 -8L-3 8" /></svg></kbd>
      </div>
      <div class="row mid">
        <kbd class="fn symbols">!#1</kbd><kbd class="mark">,</kbd><kbd class="space">Español (ES)</kbd><kbd class="mark">.</kbd>
        <kbd class="fn enter"><svg width="64" height="60" viewBox="-32 -30 64 60"><path d="M26 -24V2Q26 13 16 13H-27M-15 1L-27 13L-15 25" /></svg></kbd>
      </div>
      <div class="dock">
        <svg width="50" height="30" viewBox="0 0 50 30" fill="#fff">
          <g v-for="r in 2" :key="r"><rect v-for="c in 5" :key="c" :x="(c - 1) * 10.700" :y="(r - 1) * 10.500" width="5" height="5" rx="2" /></g>
          <rect x="0" y="21" width="5" height="5" rx="2" /><rect x="11" y="21" width="26" height="5.500" rx="2" /><rect x="42.800" y="21" width="5" height="5" rx="2" />
        </svg>
        <svg width="44" height="26" viewBox="0 0 44 26" fill="none" stroke="#fff" stroke-width="3.500"><path d="M2 2L22 21.500L42 2" /></svg>
      </div>
      <div class="home-bar"></div>
    </section>
  </div>
</template>

<style>
body { margin: 0; background: #0a0a0a; }
</style>

<style scoped>
.screen { width: 1080px; height: 2316px; overflow: hidden; display: flex; flex-direction: column; background: #0a0a0a; font-family: Roboto, sans-serif; }
.status { height: 67px; flex: none; box-sizing: border-box; padding: 13px 0 0 44px; display: flex; align-items: center; background: #180048; color: #ede9f3; font-size: 40px; line-height: 54px; }
.clock { width: 109px; padding-top: 2px; letter-spacing: -0.400px; white-space: nowrap; }
.status svg { display: block; flex: none; }
.mlogo { margin: 3px 0 0 11px; }
.check { margin-left: 17px; }
.more-dot { width: 10px; height: 10px; margin-left: 28px; border-radius: 50%; background: #ede9f3; }
.indicators { margin-left: 392px; }
.level { width: 78px; padding-top: 2px; margin-left: 10px; letter-spacing: -1.200px; white-space: nowrap; }
.battery { margin-left: 1px; }
.stage { position: relative; height: 1258px; flex: none; overflow: hidden; }
.map { display: block; }
.set-distance { position: absolute; left: 52px; top: 57px; width: 380px; height: 96px; padding: 3px 0 0 2px; border: 0; border-radius: 5px; background: #525252; color: #0c0c0c; font: 500 37px/93px Roboto, sans-serif; white-space: nowrap; box-shadow: 0 1px 5px rgba(0, 0, 0, 0.150); }
.dialog { position: absolute; left: 70px; top: 429px; width: 940px; height: 400px; box-sizing: border-box; border-radius: 6px; background: #fff; box-shadow: 0 22px 60px 4px rgba(0, 0, 0, 0.420), 0 0 14px rgba(0, 0, 0, 0.150); padding: 53px 10px 0; }
.dialog h1 { margin: 0 0 0 53px; font-size: 47.200px; line-height: 56px; font-weight: 500; color: #202121; white-space: nowrap; }
.field { display: flex; align-items: center; height: 69px; margin-top: 27px; border-bottom: 5px solid #008577; font-size: 47px; color: #202121; }
.field span { width: 77px; padding-bottom: 2px; letter-spacing: -0.500px; }
.caret { width: 5px; height: 63px; margin-bottom: 6px; background: #008577; }
.actions { display: flex; justify-content: flex-end; gap: 91px; padding: 84px 81px 0 0; }
.actions button { padding: 0; border: 0; background: none; color: #008577; font: 500 37px/52px Roboto, sans-serif; }

.sand { fill: #5f5d56; stroke: #4b4a45; }
.meadow { fill: url(#scrub); }
.meadow2 { fill: #515b40; }
.park { fill: #566355; stroke: #455a45; }
.grass { fill: #4f634f; }
.olive { fill: #57583c; }
.pitch { fill: #36584a; stroke: #2c6150; }
.school { fill: #5f5e4f; stroke: #55543d; }
.yard { fill: #606060; }
.verge { fill: #5b5a53; }
.retail { fill: #65544f; stroke: #56443f; }
.shoulder { fill: #505054; }
.pool { fill: #445a62; stroke: #36515c; }
.mint { fill: #376050; stroke: #236049; }
.building { fill: #554f4a; stroke: #48413c; stroke-width: 1; }
.building.dark { fill: #514c49; stroke: #423d3a; }
.lines { fill: none; stroke-linejoin: round; stroke-linecap: round; }
.road-case, .lane-case { stroke: #494949; }
.ped-case { stroke: #464648; }
.motor-case { stroke: #5b1830; }
.road, .lane { stroke: #666; }
.ped { stroke: #57565c; }
.motor { stroke: #5c3540; }
.ring-case { fill: #666; stroke: #494949; stroke-width: 1.500; }
.rings { fill: #666; }
.dash { fill: none; stroke-width: 1.300; stroke-dasharray: 3 2.500; }
.dash.blue { stroke: #10106b; stroke-dasharray: 2.500 3; }
.dash.red { stroke: #743832; }
.dash.pink { stroke: #743a3a; stroke-dasharray: 1.700 3; }
.map text { font-family: "Noto Sans", sans-serif; paint-order: stroke; }
.names text { font-size: 12px; fill: #000; stroke: #666; stroke-opacity: 0.600; stroke-width: 1.200px; stroke-linejoin: round; }
.names .round { font-size: 10.500px; }
.house { font-size: 9.500px; fill: #292929; stroke: #585858; stroke-width: 1.200px; text-anchor: middle; }
.place { text-anchor: middle; stroke: #60605e; stroke-opacity: 0.700; stroke-width: 1.200px; stroke-linejoin: round; }
.quarter { fill: #262626; font-style: italic; }
.quarter.up { font-style: normal; fill: #303030; }
.sport { fill: #06300f; font-style: italic; }
.leisure, .edu { fill: #23230a; font-style: italic; }
.office { fill: #382304; }
.transit { fill: #0b2c66; }
.gym { fill: #084417; font-style: italic; }
.exit { fill: #4c1420; font-style: italic; }
.map .parking { fill: #07415f; font: 700 15px "Noto Sans", sans-serif; text-anchor: middle; }
.map .parking.faint { fill: #4b5d68; }
.shield { font-size: 10px; fill: #35101b; text-anchor: middle; }
.map .caption { font: 400 37.500px Roboto, sans-serif; fill: #050505; }

.tools { height: 115px; flex: none; box-sizing: border-box; display: flex; align-items: center; gap: 106px; padding: 0 0 1px 53px; background: #252525; }
.tool { width: 84px; height: 84px; flex: none; display: flex; align-items: center; justify-content: center; border-radius: 50%; background: #3f3f3f; }
.tool svg { width: 48px; height: 48px; margin: -2px 0 0 -1px; overflow: visible; fill: none; stroke: #fafafa; stroke-width: 3.400; stroke-linecap: round; stroke-linejoin: round; }
.tool .solid { fill: #fafafa; stroke: none; }
.ellipsis { display: flex; gap: 7px; margin-left: -8px; padding-top: 2px; }
.ellipsis i { width: 8.500px; height: 8.500px; border-radius: 50%; background: #fafafa; }
.keyboard { flex: 1; padding: 23px 23px 0; display: flex; flex-direction: column; }
.row { display: flex; gap: 16px; height: 117px; margin-bottom: 33px; }
.row.mid { height: 116px; }
.row.digits { height: 96px; }
kbd { width: 89px; flex: none; box-sizing: border-box; display: flex; align-items: center; justify-content: center; border-radius: 13px; padding-top: 2px; background: #2d2d2d; color: #fafafa; font: 400 66px/1 Roboto, sans-serif; }
.digits kbd { font-size: 59px; padding-top: 5px; }
kbd.fn { background: #171717; padding-top: 0; }
kbd svg { fill: none; stroke: #fafafa; stroke-width: 4; stroke-linecap: round; stroke-linejoin: round; }
.shift { width: 125.500px; margin-right: 16px; }
.erase { width: 125.500px; margin-left: 16px; }
kbd.symbols { width: 142px; font-size: 53.500px; padding: 2px 0 0 3px; }
kbd.mark { width: 88.500px; padding-top: 17px; }
kbd.space { flex: 1; width: auto; font-size: 35.200px; }
.enter { width: 141px; }
.dock { display: flex; justify-content: space-between; align-items: flex-start; padding: 50px 117px 0 108px; height: 34px; }
.home-bar { width: 324px; height: 11px; margin: 17px auto 0; border-radius: 5px; background: #616161; }
</style>
